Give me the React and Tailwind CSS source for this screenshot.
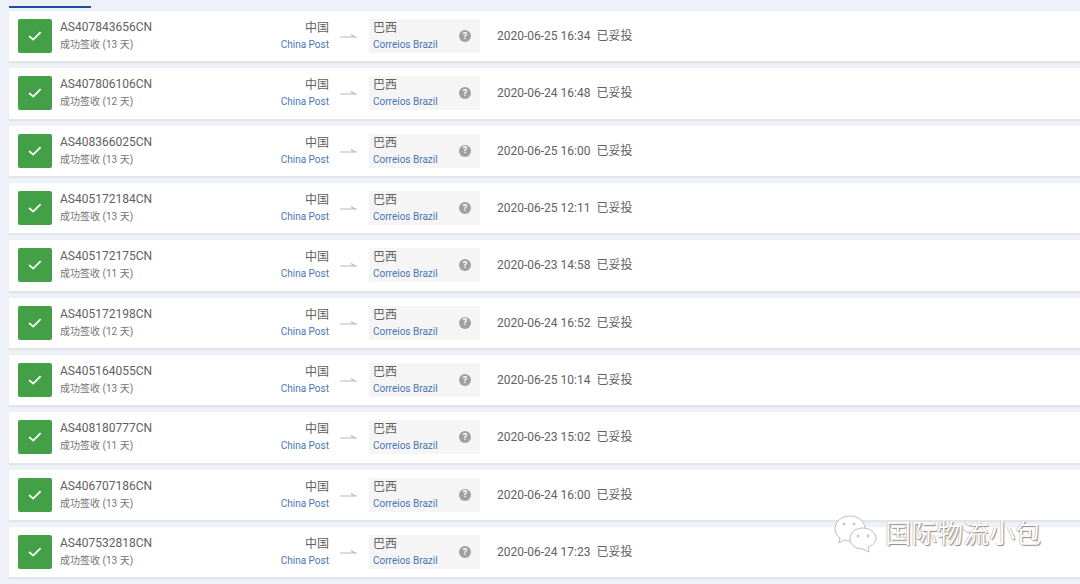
const rows = [
  ["AS407843656CN", "13", "2020-06-25 16:34"],
  ["AS407806106CN", "12", "2020-06-24 16:48"],
  ["AS408366025CN", "13", "2020-06-25 16:00"],
  ["AS405172184CN", "13", "2020-06-25 12:11"],
  ["AS405172175CN", "11", "2020-06-23 14:58"],
  ["AS405172198CN", "12", "2020-06-24 16:52"],
  ["AS405164055CN", "13", "2020-06-25 10:14"],
  ["AS408180777CN", "11", "2020-06-23 15:02"],
  ["AS406707186CN", "13", "2020-06-24 16:00"],
  ["AS407532818CN", "13", "2020-06-24 17:23"],
];

function Row({ no, days, time }) {
  return (
    <div className="flex h-[52.33px] items-center bg-white border-b-2 border-[#e3e5ea] shadow-[0_0_1px_#dfe2e8] pl-[9px] text-[#666]">
      <div className="flex h-[34px] w-[34px] items-center justify-center rounded-[2px] bg-[#43a047]">
        <svg width="16" height="16" viewBox="0 0 16 16" fill="none" stroke="#fff" strokeWidth="1.8" strokeLinecap="square">
          <path d="M2.8 8.6 L6.2 11.6 L13 4.8" />
        </svg>
      </div>
      <div className="ml-2 w-[190px]">
        <div className="text-[12px] leading-[17px] text-[#616161]">{no}</div>
        <div className="text-[10px] leading-[17px] text-[#757575]">成功签收 ({days} 天)</div>
      </div>
      <div className="w-[79px] text-right">
        <div className="text-[12px] leading-[17px] text-[#616161]">中国</div>
        <div className="text-[10px] leading-[15px] text-[#4a76b8]">China Post</div>
      </div>
      <svg className="mx-[11px] shrink-0" width="18" height="8" viewBox="0 0 18 8" fill="none">
        <path d="M0 5 H17 M11 2.5 L15 5" stroke="#b9b9b9" strokeWidth="1.2" />
      </svg>
      <div className="flex h-[34px] w-[111px] items-center justify-between bg-[#f5f5f5] pl-1 pr-[9px]">
        <div>
          <div className="text-[12px] leading-[17px] text-[#616161]">巴西</div>
          <div className="text-[10px] leading-[15px] text-[#4a76b8]">Correios Brazil</div>
        </div>
        <div className="flex h-3 w-3 items-center justify-center rounded-full bg-[#a0a0a0] text-[9px] font-bold leading-none text-white">?</div>
      </div>
      <div className="ml-[17px] text-[12px] text-[#616161]">{time}</div>
      <div className="ml-[6px] text-[12px] text-[#616161]">已妥投</div>
    </div>
  );
}

export default function App() {
  return (
    <div className="h-[584px] w-[1080px] overflow-hidden bg-[#eef1f8] relative font-['Roboto','Noto_Sans_CJK_SC',sans-serif]">
      <div className="ml-[9px] h-[8px] w-[82px] border-b-2 border-[#1f4e9e]" />
      <div className="flex flex-col gap-[5px] pl-[9px] pt-[3px]">
        {rows.map((r) => (
          <Row key={r[0]} no={r[0]} days={r[1]} time={r[2]} />
        ))}
      </div>
      <div className="absolute left-[834px] top-[515px] flex items-center gap-[7px]">
        <svg width="44" height="38" viewBox="0 0 44 38" fill="#ffffff" stroke="#bdbdbd" strokeWidth="1">
          <path d="M16 1 C7 1 1 7 1 14 C1 18 3 21 6 23 L5 28 L10 25 C12 26 14 26 16 26 C27 26 32 19 31 13 C30 6 24 1 16 1 Z" />
          <path d="M29 13 C21 13 16 18 16 24 C16 30 22 34 29 34 L35 37 L34 32 C38 30 42 28 42 23 C42 18 36 13 29 13 Z" />
          <circle cx="10" cy="9" r="1.6" fill="#c8c8c8" stroke="none" />
          <circle cx="20" cy="9" r="1.6" fill="#c8c8c8" stroke="none" />
          <circle cx="24" cy="21" r="1.4" fill="#c8c8c8" stroke="none" />
          <circle cx="34" cy="21" r="1.4" fill="#c8c8c8" stroke="none" />
        </svg>
        <div className="text-[26px] leading-none tracking-[0px] text-white [text-shadow:1px_1px_1px_#8a8a8a,-0.5px_-0.5px_0.5px_#a8a8a8]">国际物流小包</div>
      </div>
    </div>
  );
}
